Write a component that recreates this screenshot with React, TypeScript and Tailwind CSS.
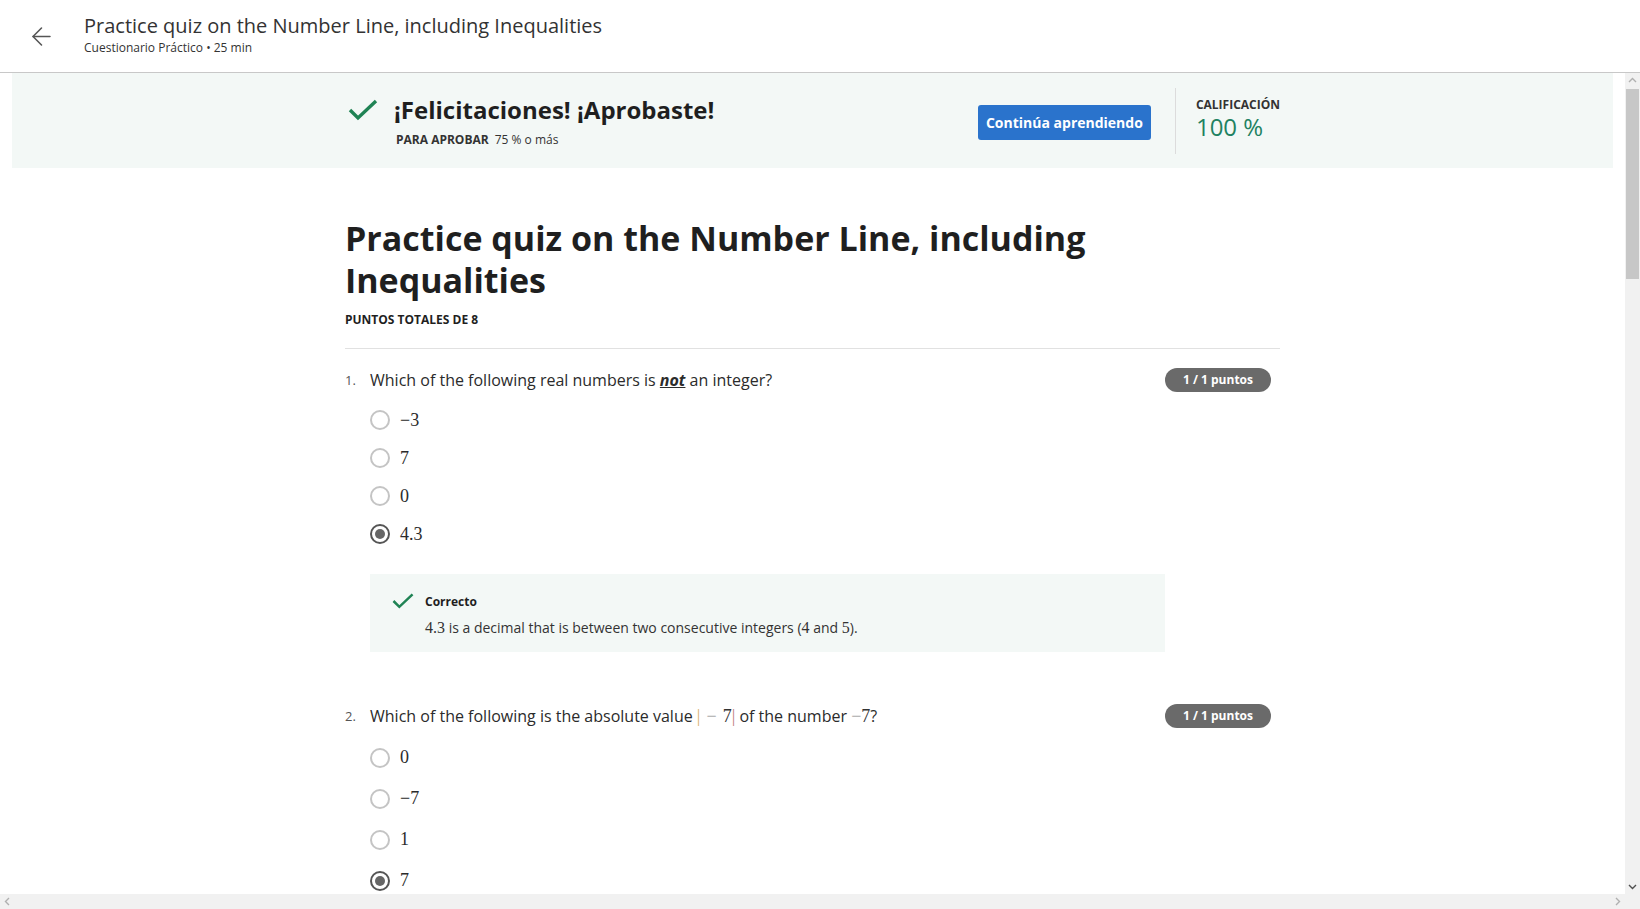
import { ArrowLeft } from "lucide-react";

const math = "font-['Liberation_Serif',serif]";

type Option = { label: string; checked?: boolean };

function Radio({ checked }: { checked?: boolean }) {
  return checked ? (
    <span className="flex size-5 shrink-0 items-center justify-center rounded-full border-2 border-[#555]">
      <span className="size-[10px] rounded-full bg-[#666]" />
    </span>
  ) : (
    <span className="size-5 shrink-0 rounded-full border-2 border-[#c4c4c4]" />
  );
}

function CheckMark({ className }: { className: string }) {
  return (
    <svg viewBox="0 0 30 24" className={className} fill="none" aria-hidden="true">
      <path d="M2 12 L10 20 L28 3" stroke="#1f8354" strokeWidth="3.4" />
    </svg>
  );
}

function Chevron({ d, color }: { d: string; color: string }) {
  return (
    <svg viewBox="0 0 15 15" className="size-[15px]" fill="none" aria-hidden="true">
      <path d={d} stroke={color} strokeWidth="1.4" />
    </svg>
  );
}

function Options({ options, rowClass }: { options: Option[]; rowClass: string }) {
  return (
    <div className="mt-[9px] flex flex-col">
      {options.map((o) => (
        <label key={o.label} className={`flex items-center gap-[10px] ${rowClass}`}>
          <Radio checked={o.checked} />
          <span className={`${math} text-[18px] text-[#2b2b2b]`}>{o.label}</span>
        </label>
      ))}
    </div>
  );
}

function Badge() {
  return (
    <span className="mr-[9px] ml-auto flex h-6 w-[106px] shrink-0 items-center justify-center rounded-full bg-[#6a6a6a] text-[12px] font-bold text-white">
      1 / 1 puntos
    </span>
  );
}

export default function App() {
  return (
    <div className="flex h-screen flex-col overflow-hidden bg-white font-['Open_Sans',sans-serif] text-[#1f1f1f]">
      <header className="flex h-[73px] shrink-0 items-start border-b border-[#c8c8c8]">
        <button type="button" className="flex h-[72px] w-[84px] items-center pl-[27px] text-[#555]" aria-label="Volver">
          <ArrowLeft className="size-[29px]" strokeWidth={1.3} />
        </button>
        <div className="pt-3">
          <h1 className="text-[20px] leading-7 text-[#333]">Practice quiz on the Number Line, including Inequalities</h1>
          <p className="text-[12px] leading-4 text-[#333]">Cuestionario Práctico • 25 min</p>
        </div>
      </header>

      <div className="flex min-h-0 flex-1">
        <div className="min-w-0 flex-1 overflow-hidden">
          <section className="mx-3 bg-[#f3f8f6]">
            <div className="mx-auto flex h-[95px] w-[935px] items-center justify-between">
              <div className="flex items-start gap-4 pl-[3px]">
                <div className="flex h-8 items-center">
                  <CheckMark className="h-6 w-[30px]" />
                </div>
                <div>
                  <h2 className="text-[24px] leading-8 font-bold text-[#1f1f1f]">¡Felicitaciones! ¡Aprobaste!</h2>
                  <p className="mt-[6px] pl-[2px] text-[12px] leading-4 text-[#333]">
                    <span className="font-bold">PARA APROBAR</span>
                    <span className="ml-[6px]">75 % o más</span>
                  </p>
                </div>
              </div>
              <div className="flex items-center">
                <button type="button" className="mt-1 h-[35px] w-[173px] rounded-[3px] bg-[#2a73cc] text-[14px] font-bold text-white">
                  Continúa aprendiendo
                </button>
                <div className="mr-5 ml-6 h-[66px] w-px bg-[#dcdcdc]" />
                <div className="pb-1">
                  <p className="text-[12px] leading-4 font-bold text-[#333]">CALIFICACIÓN</p>
                  <p className="text-[24px] leading-[28px] text-[#1f8262]">100 %</p>
                </div>
              </div>
            </div>
          </section>

          <main className="mx-auto w-[935px] pt-[49px]">
            <h1 className="text-[34px] leading-[42px] font-bold text-[#1f1f1f]">
              Practice quiz on the Number Line, including Inequalities
            </h1>
            <p className="mt-[11px] text-[12px] leading-4 font-bold text-[#1f1f1f]">PUNTOS TOTALES DE 8</p>
            <hr className="mt-5 border-[#e1e1e1]" />

            <div className="mt-[19px] flex items-start">
              <span className="w-[25px] text-[13px] leading-6 text-[#555]">1.</span>
              <div className="w-[795px]">
                <p className="text-[16px] leading-6 text-[#2b2b2b]">
                  Which of the following real numbers is{" "}
                  <em className="font-bold underline">not</em> an integer?
                </p>
                <Options
                  rowClass="h-[38px]"
                  options={[{ label: "−3" }, { label: "7" }, { label: "0" }, { label: "4.3", checked: true }]}
                />
                <div className="mt-[21px] flex h-[78px] bg-[#f3f8f6] pt-5 pl-[22px]">
                  <CheckMark className="mt-[-2px] h-[18px] w-[22px] shrink-0" />
                  <div className="ml-[11px]">
                    <p className="text-[12px] leading-4 font-bold text-[#1f1f1f]">Correcto</p>
                    <p className="mt-2 text-[14px] leading-5 text-[#333]">
                      <span className={`${math} text-[16px]`}>4.3</span> is a decimal that is between two consecutive integers (
                      <span className={`${math} text-[16px]`}>4</span> and <span className={`${math} text-[16px]`}>5</span>).
                    </p>
                  </div>
                </div>
              </div>
              <Badge />
            </div>

            <div className="mt-[52px] flex items-start">
              <span className="w-[25px] text-[13px] leading-6 text-[#555]">2.</span>
              <div className="w-[795px]">
                <p className="text-[16px] leading-6 text-[#2b2b2b]">
                  Which of the following is the absolute value{" "}
                  <span className={`${math} text-[18px]`}>
                    <span className="text-[#d8b070]">|</span>
                    <span className="mx-[6px] text-[#aaa]">−</span>
                    <span className="text-[#333]">7</span>
                    <span className="text-[#c08080]">|</span>
                  </span>{" "}
                  of the number{" "}
                  <span className={`${math} text-[18px]`}>
                    <span className="text-[#aaa]">−</span>
                    <span className="text-[#333]">7</span>
                  </span>
                  ?
                </p>
                <div className="mt-[2px]">
                  <Options
                    rowClass="h-[41px]"
                    options={[{ label: "0" }, { label: "−7" }, { label: "1" }, { label: "7", checked: true }]}
                  />
                </div>
              </div>
              <Badge />
            </div>
          </main>
        </div>

        <div className="flex w-[15px] shrink-0 flex-col bg-[#f1f1f1]">
          <Chevron d="M4 9 L7.5 5.5 L11 9" color="#b0b0b0" />
          <div className="mx-[1px] mt-px h-[190px] bg-[#c7c7c7]" />
          <div className="flex-1" />
          <Chevron d="M4 6 L7.5 9.5 L11 6" color="#505050" />
        </div>
      </div>

      <div className="flex h-[15px] shrink-0 items-center justify-between bg-[#f1f1f1] pr-[15px]">
        <Chevron d="M9 4 L5.5 7.5 L9 11" color="#b0b0b0" />
        <Chevron d="M6 4 L9.5 7.5 L6 11" color="#b0b0b0" />
      </div>
    </div>
  );
}
